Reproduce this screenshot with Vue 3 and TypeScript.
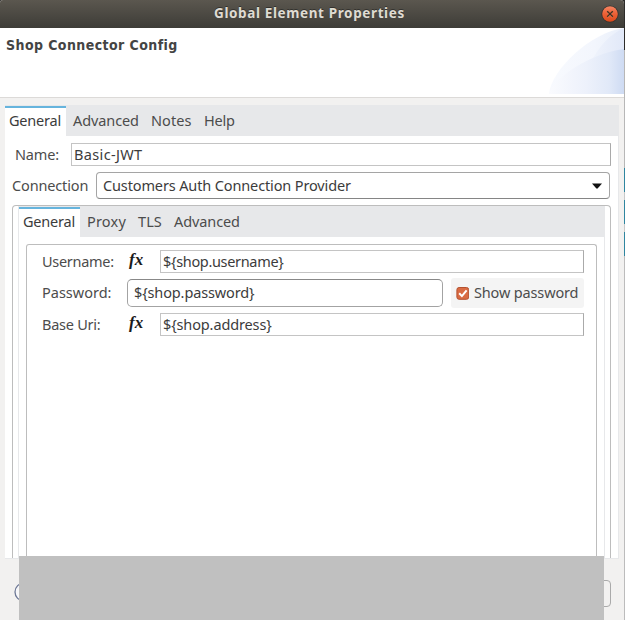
<script setup lang="ts">
import { ref } from 'vue'

interface Tab {
  label: string
  cls: string
}

const title = 'Global Element Properties'
const heading = 'Shop Connector Config'

const outerTabs: Tab[] = [
  { label: 'General', cls: 't-general' },
  { label: 'Advanced', cls: 't-advanced' },
  { label: 'Notes', cls: 't-notes' },
  { label: 'Help', cls: 't-help' },
]
const innerTabs: Tab[] = [
  { label: 'General', cls: 't-general' },
  { label: 'Proxy', cls: 't-proxy' },
  { label: 'TLS', cls: 't-tls' },
  { label: 'Advanced', cls: 't-advanced' },
]

const activeOuter = ref(0)
const activeInner = ref(0)
const showPassword = ref(true)
const name = 'Basic-JWT'
const provider = 'Customers Auth Connection Provider'
const username = '${shop.username}'
const password = '${shop.password}'
const baseUri = '${shop.address}'
</script>

<template>
  <div class="screen">
    <div class="dialog">
      <header class="titlebar">
        <span class="title">{{ title }}</span>
        <svg class="close" width="18" height="18" viewBox="0 0 18 18">
          <defs>
            <linearGradient id="closeFill" x1="0" y1="0" x2="0" y2="1">
              <stop offset="0" stop-color="#f58563" />
              <stop offset="0.5" stop-color="#ec6035" />
              <stop offset="1" stop-color="#dc4a1b" />
            </linearGradient>
          </defs>
          <circle cx="9" cy="9" r="8.6" fill="#33322e" />
          <circle cx="9" cy="9" r="7.8" fill="url(#closeFill)" />
          <path d="M6.6 7.3l4.8 4.8M11.4 7.3l-4.8 4.8" stroke="#f39a79" stroke-width="1.2" />
          <path d="M6.2 6.2l5.6 5.6M11.8 6.2l-5.6 5.6" stroke="#43301f" stroke-width="1.4" />
        </svg>
      </header>

      <section class="banner">
        <h1>{{ heading }}</h1>
        <svg class="swoosh" width="75" height="66" viewBox="0 0 75 66">
          <defs>
            <linearGradient id="outerArc" x1="0" x2="1">
              <stop offset="0" stop-color="#f8fafe" />
              <stop offset="0.6" stop-color="#f3f6fd" />
              <stop offset="1" stop-color="#e9effa" />
            </linearGradient>
            <linearGradient id="midArc" x1="0" x2="1">
              <stop offset="0" stop-color="#f0f4fc" />
              <stop offset="1" stop-color="#e1e8f8" />
            </linearGradient>
            <linearGradient id="innerArc" x1="0" x2="1">
              <stop offset="0" stop-color="#fafbfe" />
              <stop offset="0.5" stop-color="#edf1fb" />
              <stop offset="0.8" stop-color="#e1e9f8" />
              <stop offset="1" stop-color="#cedbf3" />
            </linearGradient>
          </defs>
          <path d="M0 66C2 42 42 4 75 0V66Z" fill="url(#outerArc)" />
          <path d="M42 34C50 18 62 5 75 0.5V40H42Z" fill="url(#midArc)" />
          <path d="M0 66C4 50 42 25 75 21V66Z" fill="url(#innerArc)" />
        </svg>
      </section>

      <main class="folder">
        <nav class="tabs">
          <span
            v-for="(tab, i) in outerTabs"
            :key="tab.label"
            class="tab"
            :class="[tab.cls, { active: i === activeOuter }]"
            @click="activeOuter = i"
          ><b>{{ tab.label }}</b></span>
        </nav>

        <div class="form">
          <div class="row name-row">
            <label class="l-name">Name:</label>
            <div class="entry"><span class="v-name">{{ name }}</span></div>
          </div>
          <div class="row provider-row">
            <label class="l-connection">Connection</label>
            <div class="combo">
              <span class="v-provider">{{ provider }}</span>
              <svg width="10" height="6" viewBox="0 0 10 6"><path d="M0 0.5h10L5.8 5.3q-.8.7-1.6 0z" fill="#111" /></svg>
            </div>
          </div>

          <div class="group">
            <div class="inner-folder">
              <nav class="tabs">
                <span
                  v-for="(tab, i) in innerTabs"
                  :key="tab.label"
                  class="tab"
                  :class="[tab.cls, { active: i === activeInner }]"
                  @click="activeInner = i"
                ><b>{{ tab.label }}</b></span>
              </nav>
              <div class="fields">
                <div class="row field">
                  <label class="l-username">Username:</label>
                  <i class="fx">fx</i>
                  <div class="entry"><span class="v-username">{{ username }}</span></div>
                </div>
                <div class="row field secret">
                  <label class="l-password">Password:</label>
                  <div class="rounded"><span class="v-password">{{ password }}</span></div>
                  <div class="toggle" @click="showPassword = !showPassword">
                    <svg width="13" height="13" viewBox="0 0 13 13">
                      <rect x="0.9" y="0.5" width="11.8" height="11.8" rx="2.2" fill="#d96b43" stroke="#b4512f" />
                      <path v-if="showPassword" d="M3.2 6.3l2.7 2.8L10.6 3.3" fill="none" stroke="#fff" stroke-width="2" />
                    </svg>
                    <span class="v-show">Show password</span>
                  </div>
                </div>
                <div class="row field">
                  <label class="l-uri">Base Uri:</label>
                  <i class="fx">fx</i>
                  <div class="entry"><span class="v-uri">{{ baseUri }}</span></div>
                </div>
              </div>
            </div>
          </div>
        </div>
      </main>

      <footer class="footer">
        <svg class="help" width="20" height="20" viewBox="0 0 20 20">
          <circle cx="10" cy="10" r="9" fill="#f6f6f8" stroke="#6d7896" stroke-width="1.3" />
        </svg>
        <div class="button"></div>
      </footer>
      <div class="cover"></div>
    </div>
    <aside class="backdrop"></aside>
  </div>
</template>

<style>
body {
  margin: 0;
  overflow: hidden;
}
</style>

<style scoped>
* {
  box-sizing: border-box;
}
.screen {
  display: flex;
  width: 625px;
  height: 620px;
  overflow: hidden;
  background: #2b2a28;
  font: 14.5px/20px "Noto Sans", "Open Sans", sans-serif;
  color: #4c4c4c;
  white-space: nowrap;
}
.dialog {
  position: relative;
  width: 624px;
  height: 620px;
  display: flex;
  flex-direction: column;
  background: #f2f1f0;
  border-radius: 3px 4px 0 0;
  overflow: hidden;
}
.backdrop {
  width: 1px;
  background: linear-gradient(#2d2c2a 50px, #b7b7b7 50px 168px, #2f86a0 168px 192px, #c8c8c8 192px 200px, #2f86a0 200px 224px, #c8c8c8 224px 232px, #2f86a0 232px 256px, #bcbcbc 256px);
}
.titlebar {
  flex: none;
  display: flex;
  align-items: center;
  height: 28px;
  padding: 0 5px 2px 214px;
  background: linear-gradient(#5b574f, #3d3c37);
}
.title {
  flex: 1;
  font-size: 13.5px;
  font-weight: 700;
  letter-spacing: 0.62px;
  color: #dfdbd2;
  text-shadow: 0 -1px #33322e;
}
.close {
  margin-top: 1px;
}
.banner {
  flex: none;
  display: flex;
  justify-content: space-between;
  height: 70px;
  padding-left: 6px;
  background: #fff;
  border-bottom: 1px solid #dcdad8;
}
h1 {
  margin: 7px 0 0;
  font: bold 14px/20px "DejaVu Sans", sans-serif;
  font-stretch: condensed;
  letter-spacing: 0.42px;
  color: #444;
}
.folder {
  flex: none;
  width: 614px;
  height: 454px;
  margin: 7px 0 0 5px;
  background: #fff;
  border-right: 1px solid #e7e8ea;
  border-bottom: 1px solid #e7e8ea;
}
.tabs {
  display: flex;
  height: 31px;
  padding-top: 1px;
  background: #e7e8ea;
}
.tab {
  padding: 4px 0 0 7px;
  letter-spacing: -0.1px;
}
.tab b {
  font-weight: 400;
}
.tab.active {
  width: 61px;
  padding: 2px 0 0 4px;
  border-top: 2px solid #66b4dd;
  background: #fff;
  color: #3c3c3c;
}
.t-general { letter-spacing: -0.2px; }
.t-advanced { width: 78px; }
.t-notes { width: 53px; letter-spacing: 0.1px; }
.t-help { width: 50px; letter-spacing: -0.2px; }
.t-proxy { width: 51px; letter-spacing: 0.2px; }
.t-tls { width: 36px; letter-spacing: 0.1px; }
.form {
  display: flex;
  flex-direction: column;
  height: 422px;
  padding: 7px 7px 0;
}
.row {
  display: flex;
  align-items: center;
}
.entry {
  flex: 1;
  height: 23px;
  padding-left: 2px;
  border: 1px solid #c4c4c4;
  border-right-color: #aaa;
  line-height: 20px;
  color: #3c3c3c;
  background: #fff;
}
.name-row {
  padding-left: 3px;
}
.l-name {
  width: 56px;
}
.row label {
  padding-bottom: 2px;
  letter-spacing: -0.15px;
}
.row .l-username { letter-spacing: -0.3px; }
.row .l-password { letter-spacing: 0; }
.row .l-uri { letter-spacing: -0.25px; }
.v-name { letter-spacing: 0.35px; }
.v-provider { padding-bottom: 2px; letter-spacing: -0.13px; }
.v-username { letter-spacing: -0.33px; }
.v-password { letter-spacing: -0.13px; }
.v-uri { letter-spacing: -0.13px; }
.v-show { padding-bottom: 2px; letter-spacing: -0.15px; }
.provider-row {
  margin-top: 6px;
}
.l-connection {
  width: 84px;
}
.combo {
  display: flex;
  align-items: center;
  justify-content: space-between;
  width: 514px;
  height: 27px;
  padding: 0 7px 0 6px;
  border: 1px solid #a5a5a5;
  border-bottom-color: #858585;
  border-radius: 4px;
  color: #3c3c3c;
}
.group {
  flex: 1;
  width: 599px;
  margin-top: 6px;
  padding: 0 5px;
  border: 1px solid #bdbdbd;
  border-bottom: 0;
  border-radius: 4px 4px 0 0;
}
.inner-folder {
  height: 100%;
  border: solid #e7e8ea;
  border-width: 0 1px;
}
.fields {
  display: flex;
  flex-direction: column;
  height: 313px;
  margin: 7px 7px 0;
  padding: 5px 12px 0 15px;
  border: 1px solid #bdbdbd;
  border-bottom: 0;
  border-radius: 3px 3px 0 0;
}
.field label {
  width: 85px;
}
.fx {
  width: 33px;
  height: 23px;
  padding-left: 2px;
  font: italic bold 17px/20px "Liberation Serif", serif;
  color: #1b1b1b;
}
.secret {
  height: 30px;
  margin: 5px 0;
}
.rounded {
  width: 316px;
  height: 28px;
  padding-left: 6px;
  border: 1px solid #a3a3a3;
  border-top-color: #888;
  border-radius: 5px;
  line-height: 25px;
  color: #3c3c3c;
}
.toggle {
  display: flex;
  align-items: center;
  gap: 5px;
  width: 133px;
  height: 30px;
  margin-left: 8px;
  padding-left: 5px;
  border-radius: 3px;
  background: #f4f4f4;
}
.footer {
  flex: 1;
  display: flex;
  align-items: center;
  justify-content: space-between;
  padding: 8px 13px 0 14px;
}
.help {
  margin-bottom: 3px;
}
.button {
  width: 60px;
  height: 27px;
  border: 1px solid #aaa;
  border-radius: 4px;
}
.cover {
  position: absolute;
  left: 19px;
  right: 20px;
  bottom: 0;
  height: 64px;
  background: #c0c0c0;
}
</style>
